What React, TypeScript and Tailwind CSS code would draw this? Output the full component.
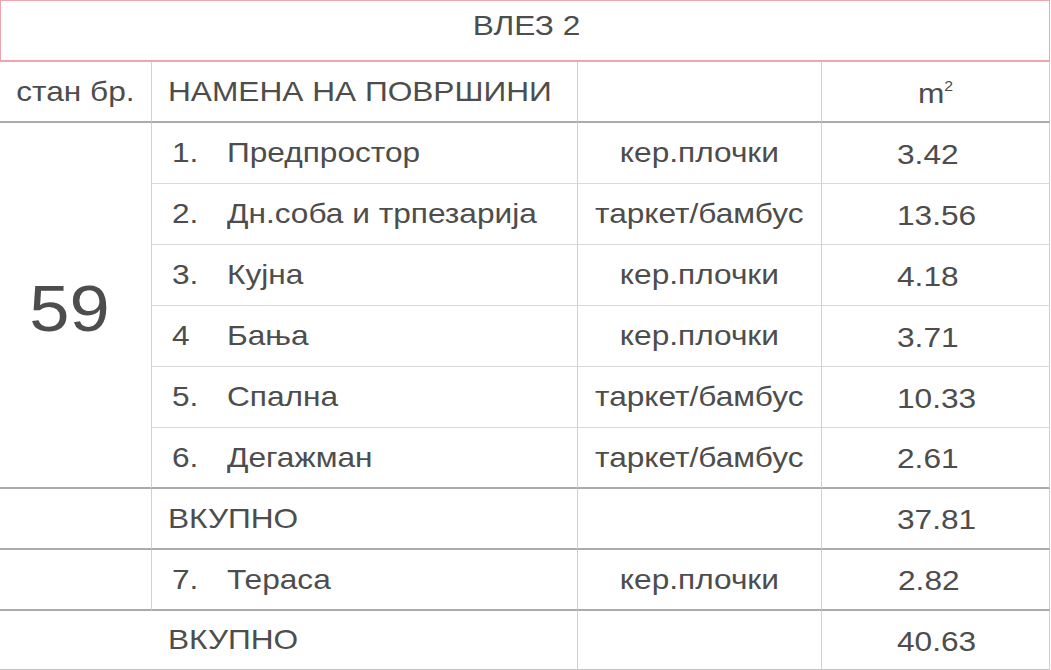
import React from 'react'

const ROOMS = [
  { no: '1.', name: 'Предпростор', floor: 'кер.плочки', area: '3.42' },
  { no: '2.', name: 'Дн.соба и трпезарија', floor: 'таркет/бамбус', area: '13.56' },
  { no: '3.', name: 'Кујна', floor: 'кер.плочки', area: '4.18' },
  { no: '4', name: 'Бања', floor: 'кер.плочки', area: '3.71' },
  { no: '5.', name: 'Спална', floor: 'таркет/бамбус', area: '10.33' },
  { no: '6.', name: 'Дегажман', floor: 'таркет/бамбус', area: '2.61' },
]

const cell = 'flex items-center border-r border-r-[#d0d0d0]'
const thick = 'border-b-2 border-b-[#ababab]'

// text in the source drawing is stretched a bit wider than Arial
const W = ({ children, center }: { children: React.ReactNode; center?: boolean }) => (
  <span className={`inline-block whitespace-nowrap scale-x-[1.13] ${center ? 'origin-center' : 'origin-left'}`}>
    {children}
  </span>
)

export default function App() {
  return (
    <div
      className="w-[1051px] h-[670px] overflow-hidden bg-white text-[#4d4d4d] text-[28px] leading-none"
      style={{ fontFamily: '"Liberation Sans", Arial, sans-serif' }}
    >
      {/* Title */}
      <div className="h-[62px] w-[1050px] border border-b-2 border-[#f0a4ac] flex items-center justify-center pl-[4px] pb-[9px]">
        <W center>ВЛЕЗ 2</W>
      </div>

      <div className="grid w-[1050px] grid-cols-[152px_426px_244px_228px] grid-rows-[61px_repeat(6,61px)_61px_61px_60px]">
        {/* Header */}
        <div className={`${cell} justify-center ${thick}`}>
          <W center>стан бр.</W>
        </div>
        <div className={`${cell} pl-[16px] ${thick}`}>
          <W>НАМЕНА НА ПОВРШИНИ</W>
        </div>
        <div className={`${cell} ${thick}`} />
        <div className={`${cell} justify-center pt-[4px] ${thick}`}>
          <W center>
            m<sup className="text-[14px] relative -top-[12px]">2</sup>
          </W>
        </div>

        {/* Apartment number */}
        <div className={`${cell} row-span-6 justify-center text-[64px] pr-[12px] pt-[8px] ${thick}`}>
          <W center>59</W>
        </div>

        {ROOMS.map((r, i) => {
          const bottom = i === ROOMS.length - 1 ? thick : 'border-b border-b-[#d9d9d9]'
          return (
            <React.Fragment key={r.no}>
              <div className={`${cell} ${bottom} pl-[20px]`}>
                <span className="w-[55px]">
                  <W>{r.no}</W>
                </span>
                <W>{r.name}</W>
              </div>
              <div className={`${cell} ${bottom} justify-center`}>
                <W center>{r.floor}</W>
              </div>
              <div className={`${cell} ${bottom} pl-[75px] pt-[3px]`}>
                <W>{r.area}</W>
              </div>
            </React.Fragment>
          )
        })}

        {/* Total */}
        <div className={`${cell} ${thick}`} />
        <div className={`${cell} pl-[16px] ${thick}`}>
          <W>ВКУПНО</W>
        </div>
        <div className={`${cell} ${thick}`} />
        <div className={`${cell} pl-[75px] pt-[3px] ${thick}`}>
          <W>37.81</W>
        </div>

        {/* Terrace */}
        <div className={`${cell} ${thick}`} />
        <div className={`${cell} pl-[20px] ${thick}`}>
          <span className="w-[55px]">
            <W>7.</W>
          </span>
          <W>Тераса</W>
        </div>
        <div className={`${cell} justify-center ${thick}`}>
          <W center>кер.плочки</W>
        </div>
        <div className={`${cell} pl-[76px] pt-[3px] ${thick}`}>
          <W>2.82</W>
        </div>

        {/* Grand total */}
        <div className={`${cell} col-span-2 pl-[168px] border-b-2 border-b-[#c4c4c4]`}>
          <W>ВКУПНО</W>
        </div>
        <div className={`${cell} border-b-2 border-b-[#c4c4c4]`} />
        <div className={`${cell} pl-[75px] pt-[3px] border-b-2 border-b-[#c4c4c4]`}>
          <W>40.63</W>
        </div>
      </div>
    </div>
  )
}
